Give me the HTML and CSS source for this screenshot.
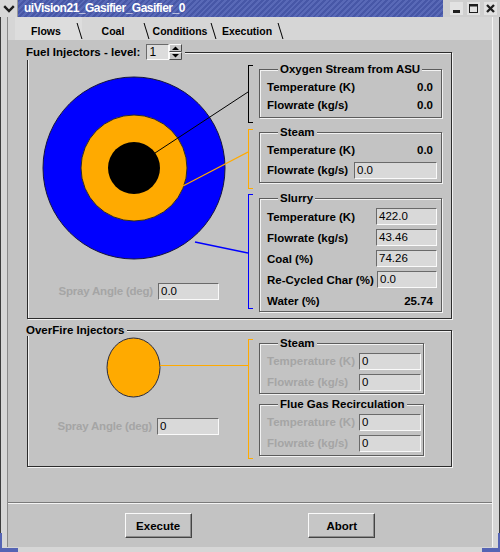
FILE: index.html
```html
<!DOCTYPE html>
<html>
<head>
<meta charset="utf-8">
<title>uiVision21_Gasifier_Gasifier_0</title>
<link rel="stylesheet" href="styles.css">
</head>
<body>
<div class="window">
  <div class="titlebar">
    <div class="menu-btn">
      <svg width="12" height="8" viewBox="0 0 12 8"><path d="M1.2 1.2 L6 6 L10.8 1.2" fill="none" stroke="#1c1c1c" stroke-width="2.4"/></svg>
    </div>
    <div class="title">uiVision21_Gasifier_Gasifier_0</div>
    <div class="wm">
      <svg class="wm-btn" width="13" height="13" viewBox="0 0 13 13"><rect width="13" height="13" fill="#e2e2e2"/><rect x="3" y="8" width="7" height="3" fill="#1e1e1e"/></svg>
      <svg class="wm-btn" width="13" height="13" viewBox="0 0 13 13"><rect width="13" height="13" fill="#e2e2e2"/><rect x="2.5" y="2.5" width="8" height="8" fill="none" stroke="#1e1e1e"/><rect x="2" y="2" width="9" height="2.5" fill="#1e1e1e"/></svg>
      <svg class="wm-btn" width="13" height="13" viewBox="0 0 13 13"><rect width="13" height="13" fill="#e2e2e2"/><path d="M3 3 L10 10 M10 3 L3 10" stroke="#1e1e1e" stroke-width="2.3"/></svg>
    </div>
  </div>
  <div class="frame">
    <div class="client">
      <div class="tabbar">
        <div class="tab active">Flows</div>
        <div class="tab">Coal</div>
        <div class="tab">Conditions</div>
        <div class="tab">Execution</div>
      </div>
      <div class="page">
        <fieldset class="group outer fuel">
          <legend>Fuel Injectors - level:<span class="spin"><span class="spin-field">1</span><svg class="spin-btns" width="13" height="16" viewBox="0 0 13 16"><rect width="13" height="16" fill="#c8c8c8"/><path d="M0.5 7.5 V0.5 H12.5" fill="none" stroke="#fafafa"/><path d="M0.5 7.5 H12.5 V0.5" fill="none" stroke="#4a4a4a"/><path d="M0.5 15.5 V8.5 H12.5" fill="none" stroke="#fafafa"/><path d="M0.5 15.5 H12.5 V8.5" fill="none" stroke="#4a4a4a"/><path d="M3 6 L6.5 2.5 L10 6 Z" fill="#000"/><path d="M3 10 L6.5 13.5 L10 10 Z" fill="#000"/></svg></span></legend>
          <div class="inj">
            <div class="leftcol">
              <svg class="diagram" width="220" height="218" viewBox="0 0 220 218">
                <circle cx="106" cy="105" r="91" fill="#0000ff" stroke="#14143c" stroke-width="1"/>
                <circle cx="106" cy="105" r="53" fill="#ffaa00" stroke="#2a2a2a" stroke-width="1"/>
                <circle cx="106" cy="105" r="26" fill="#000"/>
                <line x1="127" y1="90" x2="220" y2="29" stroke="#000" stroke-width="1"/>
                <line x1="155" y1="123" x2="220" y2="89" stroke="#ffaa00" stroke-width="1.2"/>
                <line x1="167" y1="179" x2="220" y2="190" stroke="#0000ff" stroke-width="1.6"/>
              </svg>
              <div class="spray"><span class="dim">Spray Angle (deg)</span><span class="field f61">0.0</span></div>
            </div>
            <div class="rightcol">
              <div class="unit">
                <div class="bracket bk u1"></div>
                <fieldset class="group g183 g-oxy">
                  <legend>Oxygen Stream from ASU</legend>
                  <div class="rows">
                    <div class="row"><span>Temperature (K)</span><span class="val">0.0</span></div>
                    <div class="row"><span>Flowrate (kg/s)</span><span class="val">0.0</span></div>
                  </div>
                </fieldset>
              </div>
              <div class="unit">
                <div class="bracket bo u2"></div>
                <fieldset class="group g183 g-steam">
                  <legend>Steam</legend>
                  <div class="rows gap2">
                    <div class="row"><span>Temperature (K)</span><span class="val">0.0</span></div>
                    <div class="row"><span>Flowrate (kg/s)</span><span class="field f83">0.0</span></div>
                  </div>
                </fieldset>
              </div>
              <div class="unit">
                <div class="bracket bb u3"></div>
                <fieldset class="group g183 g-slurry">
                  <legend>Slurry</legend>
                  <div class="rows">
                    <div class="row r21"><span>Temperature (K)</span><span class="field f61">422.0</span></div>
                    <div class="row r21"><span>Flowrate (kg/s)</span><span class="field f61">43.46</span></div>
                    <div class="row r21"><span>Coal (%)</span><span class="field f61">74.26</span></div>
                    <div class="row r21"><span>Re-Cycled Char (%)</span><span class="field f60">0.0</span></div>
                    <div class="row r21"><span>Water (%)</span><span class="val">25.74</span></div>
                  </div>
                </fieldset>
              </div>
            </div>
          </div>
        </fieldset>

        <fieldset class="group outer overfire">
          <legend>OverFire Injectors</legend>
          <div class="inj">
            <div class="leftcol">
              <svg class="diagram" width="220" height="80" viewBox="0 0 220 80">
                <ellipse cx="105.5" cy="31.5" rx="26.5" ry="29.5" fill="#ffaa00" stroke="#2a2a3a" stroke-width="1"/>
                <rect x="132" y="29" width="88" height="1" fill="#ffaa00" shape-rendering="crispEdges"/>
              </svg>
              <div class="spray"><span class="dim">Spray Angle (deg)</span><span class="field f62">0</span></div>
            </div>
            <div class="unit">
              <div class="bracket bo u4"></div>
              <div class="stack">
                <fieldset class="group g165">
                  <legend>Steam</legend>
                  <div class="rows gap3">
                    <div class="row"><span class="dim">Temperature (K)</span><span class="field f62">0</span></div>
                    <div class="row"><span class="dim">Flowrate (kg/s)</span><span class="field f62">0</span></div>
                  </div>
                </fieldset>
                <fieldset class="group g165 g-flue">
                  <legend>Flue Gas Recirculation</legend>
                  <div class="rows gap3">
                    <div class="row"><span class="dim">Temperature (K)</span><span class="field f62">0</span></div>
                    <div class="row"><span class="dim">Flowrate (kg/s)</span><span class="field f62">0</span></div>
                  </div>
                </fieldset>
              </div>
            </div>
          </div>
        </fieldset>
      </div>
      <div class="sep"></div>
      <div class="actions">
        <button class="btn" type="button">Execute</button>
        <button class="btn" type="button">Abort</button>
      </div>
    </div>
  </div>
  <div class="corner corner-l"></div>
  <div class="corner corner-r"></div>
</div>
</body>
</html>
```

FILE: styles.css
```css
* { box-sizing: border-box; }
html, body { margin: 0; padding: 0; }
body {
  width: 500px;
  height: 552px;
  overflow: hidden;
  font-family: "Liberation Sans", Arial, Helvetica, sans-serif;
  font-size: 11.5px;
  font-weight: bold;
  color: #000;
  background: #d6d6d6;
}
.window {
  position: relative;
  width: 500px;
  height: 552px;
  display: flex;
  flex-direction: column;
}

/* title bar */
.titlebar { height: 17px; flex: none; display: flex; }
.menu-btn {
  width: 18px;
  background: #d8d8d8;
  border-right: 1px solid #9a9a9a;
  display: flex;
  align-items: center;
  justify-content: center;
}
.title {
  flex: 1;
  color: #fff;
  font-size: 12px;
  letter-spacing: -0.5px;
  line-height: 17px;
  padding-left: 6px;
  white-space: nowrap;
  overflow: hidden;
  background: repeating-linear-gradient(135deg, #4757a7 0 2px, #5969b7 2px 4px);
}
.wm {
  width: 57px;
  display: flex;
  align-items: center;
  justify-content: flex-end;
  gap: 4px;
  padding-right: 3px;
  background: #cfcfcf;
}
.wm-btn { display: block; }

/* frame */
.frame {
  flex: 1;
  display: flex;
  flex-direction: column;
  border-left: 1px solid #3c3c3c;
  border-right: 1px solid #3c3c3c;
  padding: 0 6px 5px;
  background: #d6d6d6;
}
.client {
  flex: 1;
  display: flex;
  flex-direction: column;
  border-left: 1px solid #8a8a8a;
  border-right: 1px solid #f4f4f4;
  background: #c3c3c3;
}

/* tabs */
.tabbar {
  height: 23px;
  flex: none;
  display: flex;
  padding-left: 7px;
  background: #d6d6d6;
}
.tab {
  position: relative;
  width: 67px;
  padding: 5px 5px 0 0;
  line-height: 18px;
  text-align: center;
  font-size: 10.5px;
}
.tab::after {
  content: "";
  position: absolute;
  right: 2px;
  top: 6px;
  height: 16px;
  border-left: 1px solid #000;
  transform: skewX(17deg);
}
.tab.active { background: #dddddd; }

/* page */
.page { height: 462px; flex: none; padding: 4px 0 0 19px; }

fieldset.group {
  margin: 0;
  padding: 0;
  min-inline-size: 0;
  border: 1px solid #5c5c5c;
  box-shadow: inset 1px 1px 0 #f2f2f2, 1px 1px 0 #f2f2f2;
}
fieldset.group > legend {
  padding: 0 2px;
  margin-left: 11px;
  line-height: 12px;
  background: #c3c3c3;
  white-space: nowrap;
}
fieldset.outer { width: 425px; border-color: #2c2c2c; }
fieldset.fuel { padding: 3px 9px 6px 0; }
fieldset.outer > legend { margin-left: -2px; padding: 0 3px 0 0; }
fieldset.fuel > legend { line-height: 16px; }
fieldset.overfire { margin-top: 5px; padding: 0 27px 7px 0; }

.spin {
  display: inline-flex;
  vertical-align: top;
  margin-left: 6px;
  height: 16px;
}
.spin-field {
  width: 23px;
  height: 16px;
  background: #dcdcdc;
  border: 1px solid;
  border-color: #6a6a6a #fafafa #fafafa #6a6a6a;
  font-weight: normal;
  font-size: 12px;
  line-height: 14px;
  padding-left: 2px;
}
.spin-btns { display: block; }

.inj { display: flex; }
.leftcol { width: 220px; flex: none; display: flex; flex-direction: column; }
.diagram { display: block; }
.spray {
  height: 20px;
  display: flex;
  align-items: center;
  justify-content: flex-end;
  gap: 5px;
  padding-right: 29px;
}
.spray .dim { letter-spacing: -0.2px; }
.dim { color: #a5a5a5; }

.field {
  display: block;
  height: 17px;
  background: #d9d9d9;
  border: 1px solid;
  border-color: #6a6a6a #fafafa #fafafa #6a6a6a;
  font-weight: normal;
  font-size: 11.5px;
  line-height: 15px;
  padding-left: 2px;
  color: #000;
}
.f61 { width: 61px; }
.f60 { width: 60px; }
.f62 { width: 62px; }
.f83 { width: 83px; }

.rightcol { display: flex; flex-direction: column; gap: 3px; }
.unit { display: flex; align-items: flex-start; }
.bracket { width: 5px; flex: none; border: 1px solid; border-right: none; }
.bk { border-color: #000; }
.bo { border-color: #ffaa00; }
.bb { border-color: #0000ff; }
.u1 { height: 58px; margin-top: 2px; }
.u2 { height: 60px; margin-top: 3px; }
.u3 { height: 115px; margin-top: 2px; }
.u4 { height: 120px; margin-top: 3px; }
.unit > fieldset, .unit > .stack { margin-left: 6px; }

.stack { display: flex; flex-direction: column; gap: 4px; margin-top: 1px; }

fieldset.g183 { width: 183px; padding: 3px 4px 3px 7px; }
fieldset.g-slurry { padding: 2px 4px 0 7px; }
fieldset.g165 { width: 165px; padding: 3px 2px 2px 7px; }
fieldset.g-flue { padding-bottom: 3px; }

.rows { display: flex; flex-direction: column; }
.gap2 { gap: 2px; }
.gap3 { gap: 3px; }
.row {
  height: 18px;
  display: flex;
  align-items: center;
  justify-content: space-between;
  white-space: nowrap;
}
.r21 { height: 21px; }
.val { padding-right: 4px; }

/* bottom */
.sep {
  height: 2px;
  flex: none;
  border-top: 1px solid #7a7a7a;
  border-bottom: 1px solid #f4f4f4;
}
.actions {
  flex: 1;
  display: flex;
  justify-content: space-evenly;
  align-items: flex-start;
  padding-top: 9px;
}
.btn {
  width: 67px;
  height: 25px;
  padding: 0;
  font-family: "Liberation Sans", Arial, Helvetica, sans-serif;
  font-size: 11.5px;
  font-weight: bold;
  color: #000;
  background: #c6c6c6;
  border: 1px solid;
  border-color: #fafafa #444 #444 #fafafa;
  box-shadow: inset -1px -1px 0 #8c8c8c;
}

.corner {
  position: absolute;
  bottom: 0;
  width: 18px;
  height: 19px;
  border-style: solid;
  border-color: #5564b4;
}
.corner-l { left: 0; border-width: 0 0 4px 2px; }
.corner-r { right: 0; border-width: 0 2px 4px 0; }
```
